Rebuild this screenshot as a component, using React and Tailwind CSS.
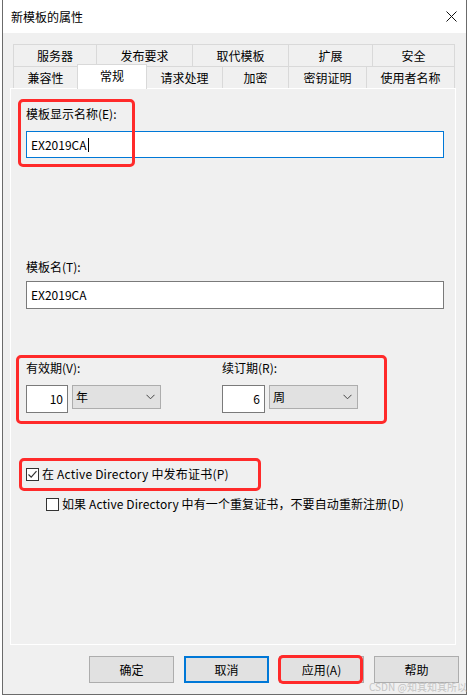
import React from 'react';

const row1 = [
  { label: '服务器', w: 'w-[83px]' },
  { label: '发布要求', w: 'w-[96px]' },
  { label: '取代模板', w: 'w-[96px]' },
  { label: '扩展', w: 'w-[84px]' },
  { label: '安全', w: 'w-[83px]' },
];

const row2 = [
  { label: '兼容性', w: 'w-[64px]' },
  { label: '常规', w: 'w-[70px]', active: true },
  { label: '请求处理', w: 'w-[76px]' },
  { label: '加密', w: 'w-[66px]' },
  { label: '密钥证明', w: 'w-[78px]' },
  { label: '使用者名称', w: 'w-[89px]' },
];

const Chevron = () => (
  <svg width="9" height="6" viewBox="0 0 9 6" fill="none">
    <path d="M0.5 0.8 L4.5 4.8 L8.5 0.8" stroke="#444" strokeWidth="1" />
  </svg>
);

const Checkbox = ({ checked }) => (
  <div className="w-[13px] h-[13px] bg-white border border-[#333] flex items-center justify-center shrink-0">
    {checked && (
      <svg width="11" height="11" viewBox="0 0 11 11" fill="none">
        <path d="M1.5 5.5 L4.2 8.2 L9.5 2.2" stroke="#333" strokeWidth="1.2" />
      </svg>
    )}
  </div>
);

const PeriodField = ({ label, value, unit, inputW }) => (
  <div className="flex flex-col">
    <div className="leading-[16px]">{label}</div>
    <div className="flex items-start mt-[9px]">
      <div className={`${inputW} h-[28px] bg-white border border-[#7a7a7a] flex items-center justify-end pr-[4px]`}>
        {value}
      </div>
      <div className="ml-[4px] w-[89px] h-[24px] bg-[#e1e1e1] border border-[#adadad] flex items-center justify-between pl-[3px] pr-[5px]">
        <span>{unit}</span>
        <Chevron />
      </div>
    </div>
  </div>
);

const Button = ({ label, focused }) => (
  <div
    className={`w-[85px] h-[27px] bg-[#e1e1e1] flex items-center justify-center ${
      focused ? 'border-2 border-[#0078d7]' : 'border border-[#adadad]'
    }`}
  >
    {label}
  </div>
);

export default function App() {
  return (
    <div className="relative w-[469px] h-[697px] bg-white overflow-hidden text-[12px] text-black font-['Noto_Sans_CJK_SC',sans-serif]">
      {/* Window */}
      <div className="ml-[2px] w-[465px] h-[695px] border-x border-b border-[#6b6b6b] bg-[#f0f0f0] flex flex-col">
        {/* Title bar */}
        <div className="h-[33px] bg-white flex items-center justify-between pl-[8px] pr-[9px]">
          <span className="leading-[16px]">新模板的属性</span>
          <svg width="11" height="11" viewBox="0 0 11 11" fill="none">
            <path d="M0.5 0.5 L10.5 10.5 M10.5 0.5 L0.5 10.5" stroke="#111" strokeWidth="1" />
          </svg>
        </div>

        {/* Tabs */}
        <div className="mt-[11px] pl-[10px] flex flex-col">
          <div className="flex h-[22px]">
            {row1.map((t, i) => (
              <div
                key={t.label}
                className={`${t.w} h-[22px] border-t border-l border-[#d9d9d9] flex items-center justify-center leading-[16px] ${
                  i === row1.length - 1 ? 'border-r' : ''
                }`}
              >
                {t.label}
              </div>
            ))}
          </div>
          <div className="flex h-[22px]">
            {row2.map((t, i) =>
              t.active ? (
                <div
                  key={t.label}
                  className={`${t.w} -mr-[1px] relative z-10 self-start -mt-[2px] h-[25px] bg-white border-x border-t border-[#d9d9d9] flex items-start justify-center pt-[3px] leading-[16px]`}
                >
                  {t.label}
                </div>
              ) : (
                <div
                  key={t.label}
                  className={`${t.w} h-[22px] border-t border-l border-[#d9d9d9] flex items-center justify-center leading-[16px] ${
                    i === row2.length - 1 ? 'border-r' : ''
                  }`}
                >
                  {t.label}
                </div>
              )
            )}
          </div>
        </div>

        {/* Panel */}
        <div className="ml-[7px] w-[446px] h-[557px] border border-white flex flex-col pl-[15px] pt-[17px]">
          <div className="leading-[16px]">模板显示名称(E):</div>
          <div className="mt-[9px] w-[418px] h-[27px] bg-white border border-[#0078d7] flex items-center pl-[4px]">
            <span>EX2019CA</span>
            <span className="ml-[1px] w-[1px] h-[14px] bg-black" />
          </div>

          <div className="mt-[101px] leading-[16px]">模板名(T):</div>
          <div className="mt-[6px] w-[418px] h-[28px] bg-white border border-[#7a7a7a] flex items-center pl-[4px]">
            EX2019CA
          </div>

          <div className="mt-[51px] flex">
            <div className="w-[196px]">
              <PeriodField label="有效期(V):" value="10" unit="年" inputW="w-[42px]" />
            </div>
            <PeriodField label="续订期(R):" value="6" unit="周" inputW="w-[43px]" />
          </div>

          <div className="mt-[53px] flex items-center h-[16px] gap-[3px]">
            <Checkbox checked />
            <span className="leading-[16px] tracking-[0.2px]">在 Active Directory 中发布证书(P)</span>
          </div>
          <div className="mt-[14px] ml-[20px] flex items-center h-[16px] gap-[3px]">
            <Checkbox />
            <span className="leading-[16px] tracking-[0.1px]">如果 Active Directory 中有一个重复证书，不要自动重新注册(D)</span>
          </div>
        </div>

        {/* Buttons */}
        <div className="mt-[11px] flex justify-end gap-[10px] pr-[7px]">
          <Button label="确定" />
          <Button label="取消" focused />
          <Button label="应用(A)" />
          <Button label="帮助" />
        </div>
      </div>

      {/* Red annotation boxes */}
      <div className="absolute left-[18px] top-[99px] w-[117px] h-[68px] border-[3px] border-[#ff2a2a] rounded-[5px]" />
      <div className="absolute left-[16px] top-[355px] w-[371px] h-[69px] border-[3px] border-[#ff2a2a] rounded-[5px]" />
      <div className="absolute left-[19px] top-[458px] w-[242px] h-[33px] border-[3px] border-[#ff2a2a] rounded-[5px]" />
      <div className="absolute left-[278px] top-[655px] w-[85px] h-[29px] border-[3px] border-[#ff2a2a] rounded-[5px]" />

      {/* Watermark */}
      <div className="absolute left-[369px] top-[680px] whitespace-nowrap text-[10px] leading-[13px] text-[#c4c4c4]">
        CSDN @知其知其所以
      </div>
    </div>
  );
}
